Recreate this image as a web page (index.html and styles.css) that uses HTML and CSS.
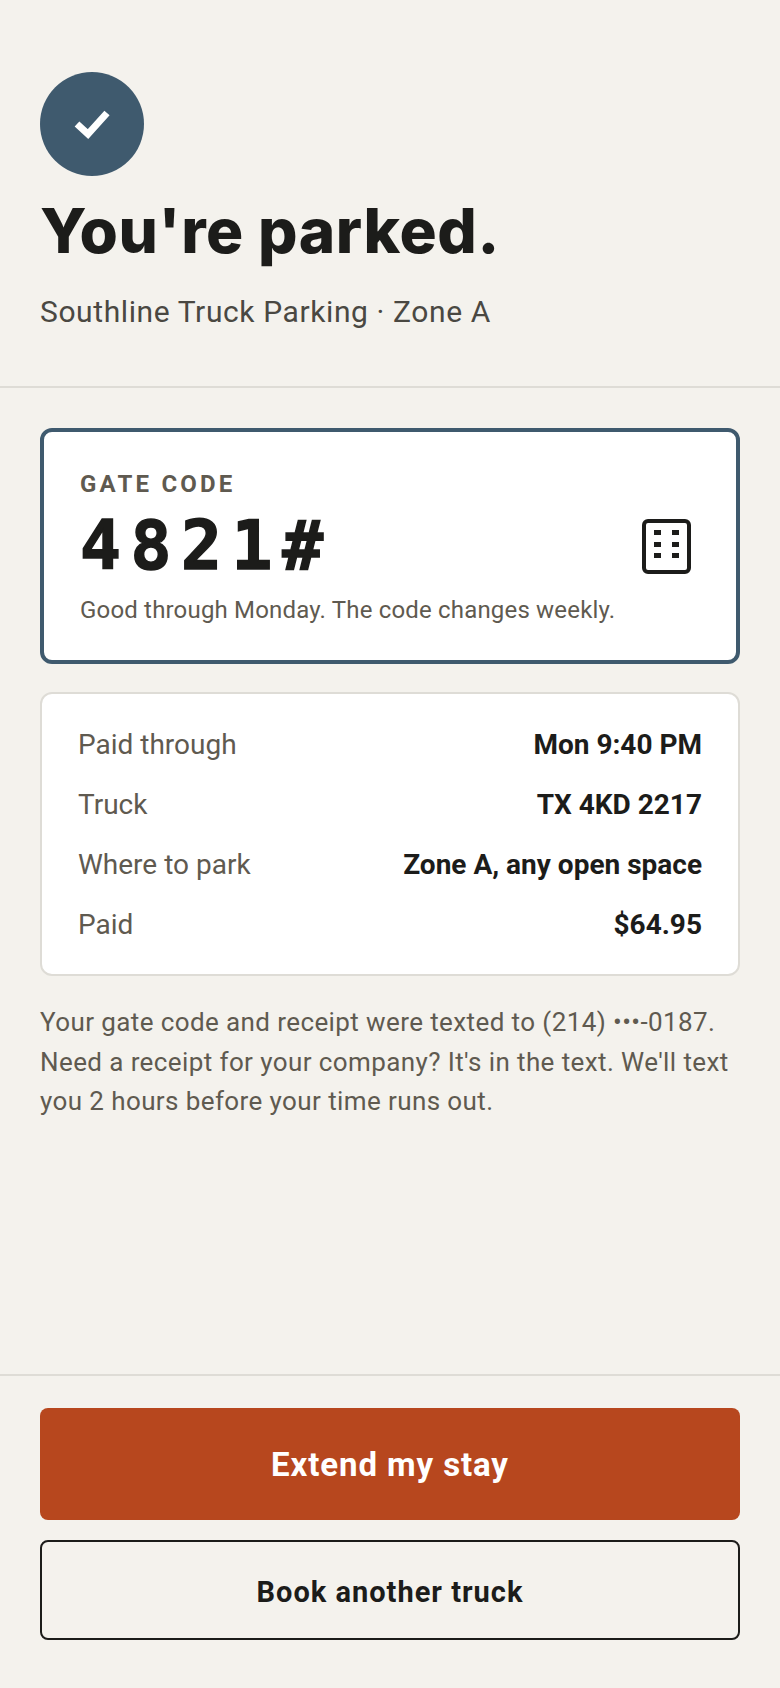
FILE: index.html
```html
<!DOCTYPE html>
<html lang="en">
<head>
<meta charset="utf-8">
<title>You're parked</title>
<link rel="stylesheet" href="styles.css">
</head>
<body>
<main class="page">
  <header class="hero">
    <div class="badge">
      <svg width="36" height="30" viewBox="0 0 36 30" aria-hidden="true"><path class="check" d="M3 15 L14 25 L33 4"/></svg>
    </div>
    <h1 class="title">You're parked.</h1>
    <p class="subtitle">Southline Truck Parking · Zone A</p>
  </header>
  <section class="content">
    <div class="gate">
      <div class="gate-text">
        <div class="gate-label">GATE CODE</div>
        <div class="gate-code">4821#</div>
        <div class="gate-note">Good through Monday. The code changes weekly.</div>
      </div>
      <svg class="keypad" width="49" height="55" viewBox="0 0 49 55" aria-hidden="true">
        <rect class="keypad-frame" x="2" y="2" width="45" height="51" rx="4"/>
        <rect class="keypad-dot" x="12" y="11" width="7" height="5"/><rect class="keypad-dot" x="30" y="11" width="7" height="5"/>
        <rect class="keypad-dot" x="12" y="23" width="7" height="5"/><rect class="keypad-dot" x="30" y="23" width="7" height="5"/>
        <rect class="keypad-dot" x="12" y="34" width="7" height="5"/><rect class="keypad-dot" x="30" y="34" width="7" height="5"/>
      </svg>
    </div>
    <dl class="details">
      <div class="row"><dt>Paid through</dt><dd>Mon 9:40 PM</dd></div>
      <div class="row"><dt>Truck</dt><dd>TX 4KD 2217</dd></div>
      <div class="row"><dt>Where to park</dt><dd>Zone A, any open space</dd></div>
      <div class="row"><dt>Paid</dt><dd>$64.95</dd></div>
    </dl>
    <p class="note">Your gate code and receipt were texted to (214) •••-0187.<br>Need a receipt for your company? It's in the text. We'll text<br>you 2 hours before your time runs out.</p>
  </section>
  <footer class="actions">
    <button class="btn btn-primary">Extend my stay</button>
    <button class="btn btn-secondary">Book another truck</button>
  </footer>
</main>
</body>
</html>
```
FILE: styles.css
```css
* { box-sizing: border-box; }
html, body { margin: 0; height: 100%; }
body { background: #f4f2ed; color: #1c1c1a; font-family: "Roboto", "Noto Sans", sans-serif; }
.page { height: 1688px; display: flex; flex-direction: column; }
.hero { padding: 72px 40px 0; height: 388px; border-bottom: 2px solid #dedcd6; }
.badge { width: 104px; height: 104px; border-radius: 50%; background: #3f5a6e; display: flex; align-items: center; justify-content: center; }
.check { fill: none; stroke: #fff; stroke-width: 7; }
.title { margin: 21px 0 0; font: 800 62px/68px "Inter", sans-serif; letter-spacing: 0.6px; }
.subtitle { margin: 27px 0 0; font-size: 30px; line-height: 40px; color: #4a4842; letter-spacing: 0.6px; }
.content { flex: 1; padding: 40px 40px 0; }
.gate { height: 236px; background: #fff; border: 4px solid #3f5a6e; border-radius: 12px; padding: 0 45px 0 36px; display: flex; justify-content: space-between; align-items: center; }
.gate-text { padding-top: 4px; }
.gate-label { font-weight: 700; font-size: 24px; line-height: 28px; letter-spacing: 3.2px; color: #5f5a50; }
.gate-code { font: 700 68px/76px "DejaVu Sans Mono", monospace; letter-spacing: 9.6px; margin-top: 10px; -webkit-text-stroke: 1.5px #1c1c1a; }
.gate-note { font-size: 24px; line-height: 34px; color: #5f5a50; margin-top: 9px; letter-spacing: 0.18px; }
.keypad { flex: none; }
.keypad-frame { fill: none; stroke: #1c1c1a; stroke-width: 4; }
.keypad-dot { fill: #1c1c1a; }
.details { margin: 28px 0 0; height: 284px; background: #fff; border: 2px solid #dedcd6; border-radius: 12px; padding: 20px 36px; display: flex; flex-direction: column; }
.row { display: flex; justify-content: space-between; align-items: center; height: 60px; font-size: 28px; }
.row dt { color: #5f5a50; }
.row dd { margin: 0; font-weight: 700; }
.note { margin: 27px 0 0; font-size: 26px; line-height: 39.5px; color: #5f5a50; white-space: nowrap; letter-spacing: 0.4px; }
.actions { border-top: 2px solid #dedcd6; padding: 32px 40px 48px; display: flex; flex-direction: column; gap: 20px; }
.btn { display: block; width: 100%; font-family: "Roboto", sans-serif; font-weight: 700; border-radius: 8px; }
.btn-primary { height: 112px; background: #b7471e; color: #fff; border: 0; font-size: 33px; letter-spacing: 0.9px; }
.btn-secondary { height: 100px; background: transparent; color: #1c1c1a; border: 2px solid #1c1c1a; font-size: 29px; letter-spacing: 1px; padding-top: 5px; }
```
